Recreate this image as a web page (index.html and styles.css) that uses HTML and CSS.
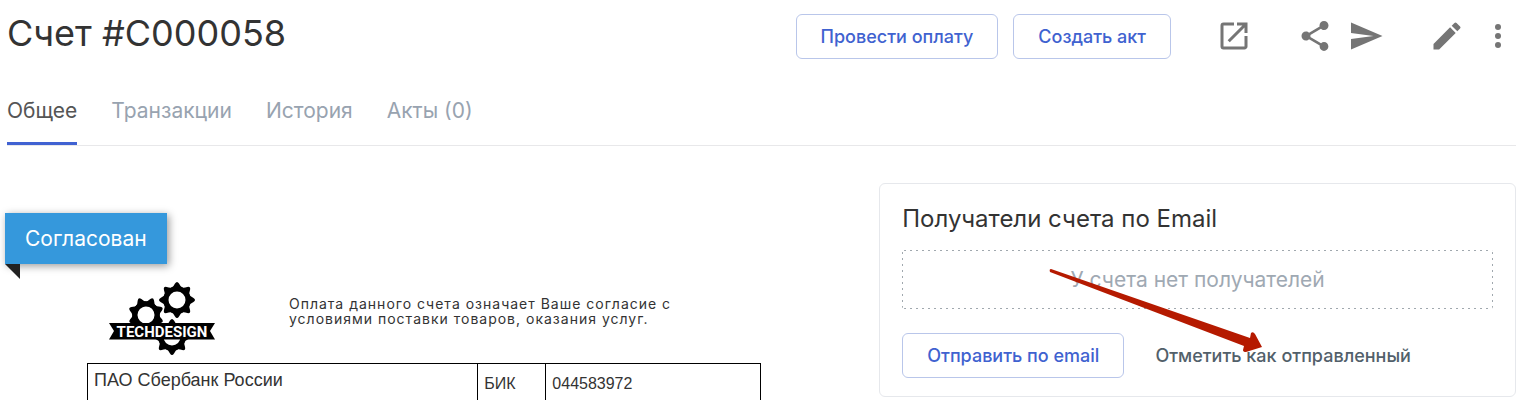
FILE: index.html
```
<!DOCTYPE html>
<html lang="ru">
<head>
    <meta charset="UTF-8">
    <meta name="viewport" content="width=device-width, initial-scale=1.0">
    <title>Счет #C000058</title>
    <link rel="stylesheet" href="styles.css">
</head>
<body>
    <header class="header">
        <h1 class="title">Счет #C000058</h1>
        <div class="header-buttons">
            <button class="btn" type="button">Провести оплату</button>
            <button class="btn" type="button">Создать акт</button>
        </div>
        <div class="icon-group">
            <button class="icon-btn" type="button" aria-label="Открыть">
                <svg viewBox="0 0 24 24"><path d="M19 19H5V5h7V3H5a2 2 0 0 0-2 2v14a2 2 0 0 0 2 2h14c1.100 0 2-.9 2-2v-7h-2v7zM14 3v2h3.590l-9.830 9.830 1.410 1.410L19 6.410V10h2V3h-7z"/></svg>
            </button>
        </div>
        <div class="icon-group">
            <button class="icon-btn" type="button" aria-label="Поделиться">
                <svg viewBox="0 0 24 24"><path d="M18 16.080c-.76 0-1.440.3-1.960.77L8.910 12.700c.05-.23.09-.46.09-.7s-.04-.47-.09-.7l7.050-4.110c.54.5 1.250.81 2.040.81 1.660 0 3-1.340 3-3s-1.340-3-3-3-3 1.340-3 3c0 .24.04.47.09.7L8.040 9.810C7.500 9.310 6.790 9 6 9c-1.660 0-3 1.340-3 3s1.340 3 3 3c.79 0 1.500-.31 2.040-.81l7.120 4.160c-.05.21-.08.43-.08.65 0 1.610 1.310 2.920 2.920 2.920s2.920-1.310 2.920-2.920-1.310-2.920-2.920-2.920z"/></svg>
            </button>
            <button class="icon-btn" type="button" aria-label="Отправить">
                <svg viewBox="0 0 24 24"><path d="M2.010 21L23 12 2.010 3 2 10l15 2-15 2z"/></svg>
            </button>
        </div>
        <div class="icon-group">
            <button class="icon-btn" type="button" aria-label="Редактировать">
                <svg viewBox="0 0 24 24"><path d="M3 17.250V21h3.750L17.810 9.940l-3.750-3.750L3 17.250zM20.710 7.040a1 1 0 0 0 0-1.410l-2.340-2.340a1 1 0 0 0-1.410 0l-1.830 1.830 3.750 3.750 1.830-1.830z"/></svg>
            </button>
            <button class="icon-btn" type="button" aria-label="Еще">
                <svg viewBox="0 0 24 24"><circle cx="12" cy="6" r="2"/><circle cx="12" cy="12" r="2"/><circle cx="12" cy="18" r="2"/></svg>
            </button>
        </div>
    </header>

    <nav class="tabs">
        <a class="tab active" href="#general">Общее</a>
        <a class="tab" href="#transactions">Транзакции</a>
        <a class="tab" href="#history">История</a>
        <a class="tab" href="#acts">Акты (0)</a>
    </nav>

    <main class="content">
        <section class="invoice">
            <div class="ribbon">Согласован</div>
            <div class="sheet">
                <div class="sheet-top">
                    <svg class="logo" viewBox="0 0 106 73" role="img" aria-label="TECHDESIGN">
                        <defs>
                            <path id="tooth" d="M-6 -12Q-3.500 -13 -2 -16.500Q0 -19.500 2 -16.500Q3.500 -13 6 -12Z"/>
                            <g id="gear">
                                <circle r="11" fill="none" stroke="#000" stroke-width="5"/>
                                <use href="#tooth"/>
                                <use href="#tooth" transform="rotate(45)"/>
                                <use href="#tooth" transform="rotate(90)"/>
                                <use href="#tooth" transform="rotate(135)"/>
                                <use href="#tooth" transform="rotate(180)"/>
                                <use href="#tooth" transform="rotate(225)"/>
                                <use href="#tooth" transform="rotate(270)"/>
                                <use href="#tooth" transform="rotate(315)"/>
                            </g>
                        </defs>
                        <use href="#gear" transform="translate(68 18)"/>
                        <use href="#gear" transform="translate(37 33) rotate(22)"/>
                        <use href="#gear" transform="translate(63 55)"/>
                        <path d="M0 41H106L101 49L106 57.500H0L5 49Z"/>
                        <text class="logo-text" x="53" y="55" text-anchor="middle">TECHDESIGN</text>
                    </svg>
                    <p class="note">Оплата данного счета означает Ваше согласие с условиями поставки товаров, оказания услуг.</p>
                </div>
                <table class="bank">
                    <tr>
                        <td class="bank-name">ПАО Сбербанк России</td>
                        <td class="bank-label">БИК</td>
                        <td>044583972</td>
                    </tr>
                </table>
            </div>
        </section>

        <aside class="card">
            <h2 class="card-title">Получатели счета по Email</h2>
            <div class="empty">У счета нет получателей</div>
            <div class="card-buttons">
                <button class="btn" type="button">Отправить по email</button>
                <button class="btn btn-flat" type="button">Отметить как отправленный</button>
            </div>
            <svg class="arrow" viewBox="0 0 214 86" aria-hidden="true">
                <path d="M2 0L201 69L202 64Q204 62 206 65L213 78L197 83Q194 83 194 81L195 77L1 3Q0 0 2 0Z"/>
            </svg>
        </aside>
    </main>
</body>
</html>
```
FILE: styles.css
```
* {
    box-sizing: border-box;
}
body {
    margin: 0;
    padding: 0 11px 0 7px;
    background: #fff;
    color: #333;
    font-family: Inter, sans-serif;
}

/* header */
.header {
    display: flex;
    gap: 45px;
    padding-top: 14px;
}
.title {
    flex: 1;
    margin: 0;
    font-size: 36px;
    font-weight: 400;
    line-height: 38px;
}
.header-buttons,
.icon-group {
    display: flex;
    gap: 15px;
}
.btn {
    height: 45px;
    padding: 0 24px;
    border: 1px solid #b9c6ea;
    border-radius: 6px;
    background: #fff;
    color: #3f62d0;
    font-family: inherit;
    font-size: 18px;
    font-weight: 500;
    white-space: nowrap;
    cursor: pointer;
}
.btn-flat {
    border-color: transparent;
    color: #52606a;
}
.icon-btn {
    width: 36px;
    height: 44px;
    padding: 0;
    border: none;
    background: none;
    cursor: pointer;
}
.icon-btn svg {
    display: block;
    fill: #757575;
}

/* tabs */
.tabs {
    display: flex;
    gap: 34px;
    margin-top: 18px;
    border-bottom: 1px solid #e8e8ea;
}
.tab {
    padding: 20px 0 18px;
    border-bottom: 3px solid transparent;
    color: #98a3b0;
    font-size: 21px;
    line-height: 27px;
    text-decoration: none;
}
.tab.active {
    border-color: #4062d2;
    color: #555;
}

/* content */
.content {
    display: flex;
    align-items: flex-start;
    padding-top: 37px;
}
.invoice {
    flex: 1;
    padding-top: 30px;
}
.ribbon {
    position: relative;
    width: fit-content;
    margin-left: -2px;
    padding: 0 20px;
    background: #3598dc;
    box-shadow: 2px 2px 8px rgba(0, 0, 0, 0.4);
    color: #fff;
    font-size: 21px;
    line-height: 51px;
}
.ribbon::after {
    content: "";
    position: absolute;
    top: 100%;
    left: 0;
    border-top: 15px solid #222;
    border-left: 15px solid transparent;
}
.sheet {
    max-width: 754px;
    padding: 18px 0 0 80px;
}
.sheet-top {
    display: flex;
    gap: 74px;
    padding-left: 22px;
}
.logo {
    flex: none;
    width: 106px;
    height: 73px;
}
.logo-text {
    fill: #fff;
    font-family: Roboto, sans-serif;
    font-size: 15px;
    font-weight: 700;
}
.note {
    max-width: 400px;
    margin: 14px 0 0;
    font-size: 14px;
    line-height: 15px;
    letter-spacing: 1px;
}
.bank {
    width: 100%;
    margin-top: 8px;
    border-collapse: collapse;
    table-layout: fixed;
    font-family: "Liberation Sans", Arial, sans-serif;
    font-size: 16px;
    line-height: 20px;
}
.bank td {
    padding: 10px 6px;
    border: 1px solid #000;
    border-bottom: none;
    vertical-align: top;
}
.bank .bank-name {
    width: 58%;
    padding-top: 6px;
    font-size: 18px;
}
.bank .bank-label {
    width: 68px;
}

/* recipients */
.card {
    position: relative;
    flex: 0 0 42.2%;
    padding: 20px 22px 18px;
    border: 1px solid #e6e8ec;
    border-radius: 6px;
}
.card-title {
    margin: 0;
    font-size: 24px;
    font-weight: 400;
    line-height: 30px;
}
/* sparse dashes: 2px on, 4px off */
.empty {
    --dash: #a0a8ae 0 2px, transparent 2px 6px;
    margin: 16px 0 24px;
    padding: 1px;
    border-radius: 3px;
    background:
        repeating-linear-gradient(90deg, var(--dash)) 2px 0 / 100% 1px no-repeat,
        repeating-linear-gradient(90deg, var(--dash)) 2px 100% / 100% 1px no-repeat,
        repeating-linear-gradient(180deg, var(--dash)) 0 2px / 1px 100% no-repeat,
        repeating-linear-gradient(180deg, var(--dash)) 100% 2px / 1px 100% no-repeat;
    color: #9fa9b3;
    font-size: 21px;
    line-height: 57px;
    text-align: center;
}
.card-buttons {
    display: flex;
    gap: 6px;
}
.arrow {
    position: absolute;
    top: 85px;
    left: 169px;
    width: 214px;
    height: 86px;
    fill: #b51a00;
}
```
